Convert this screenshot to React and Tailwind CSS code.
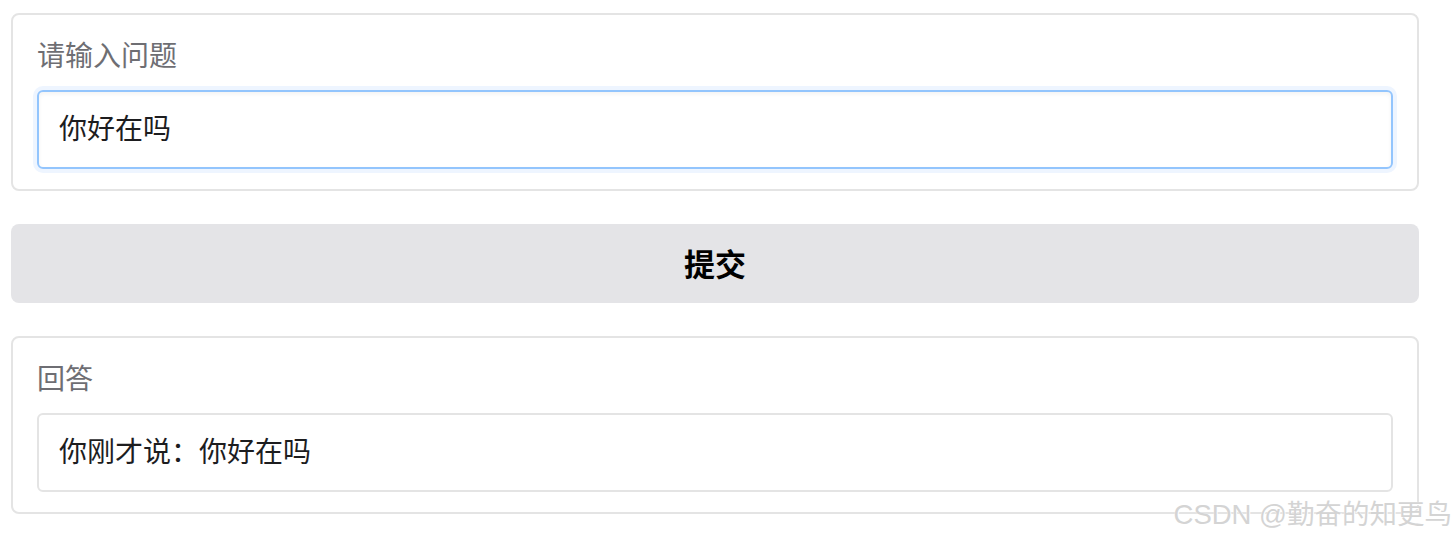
import React, { useState } from 'react';

const font = { fontFamily: '"Noto Sans CJK SC", "Liberation Sans", sans-serif' };

export default function App() {
  const [question, setQuestion] = useState('你好在吗');
  const [answer, setAnswer] = useState('你刚才说：你好在吗');

  const submit = () => setAnswer('你刚才说：' + question);

  return (
    <div className="relative w-[1456px] h-[540px] bg-white pt-[13px] pl-[11px] pr-[37px] overflow-hidden" style={font}>
      <div className="border-2 border-[#e4e4e4] rounded-lg px-6 pt-[23px] pb-5">
        <div className="text-[28px] leading-[32px] text-[#6e6e73] mb-[20px]">请输入问题</div>
        <input
          autoFocus
          onFocus={(e) => e.target.setSelectionRange(e.target.value.length, e.target.value.length)}
          value={question}
          onChange={(e) => setQuestion(e.target.value)}
          className="w-full h-[79px] px-5 pb-[5px] text-[28px] text-[#1d1d1f] caret-[#1d1d1f] border-2 border-[#93c5fd] rounded-md outline-none ring-4 ring-[#eef5ff] shadow-[inset_0_2px_4px_rgba(0,0,0,0.05)]"
          style={font}
        />
      </div>

      <button
        onClick={submit}
        className="mt-[33px] w-full h-[79px] bg-[#e4e4e7] rounded-lg text-[31px] font-bold text-black"
        style={font}
      >
        提交
      </button>

      <div className="mt-[33px] border-2 border-[#e4e4e4] rounded-lg px-6 pt-[23px] pb-5">
        <div className="text-[28px] leading-[32px] text-[#6e6e73] mb-[20px]">回答</div>
        <div className="h-[79px] px-5 pb-[5px] flex items-center text-[28px] text-[#1d1d1f] border-2 border-[#e4e4e4] rounded-md">
          {answer}
        </div>
      </div>

      <div
        className="absolute right-[4px] top-[497px] text-[27.5px] leading-[36px] text-[#d4d4d4] whitespace-nowrap [text-shadow:0_0_1px_#fff,1px_1px_0_#fff]"
        style={{ fontFamily: '"Liberation Sans", "Noto Sans CJK SC", sans-serif' }}
      >
        CSDN @勤奋的知更鸟
      </div>
    </div>
  );
}
